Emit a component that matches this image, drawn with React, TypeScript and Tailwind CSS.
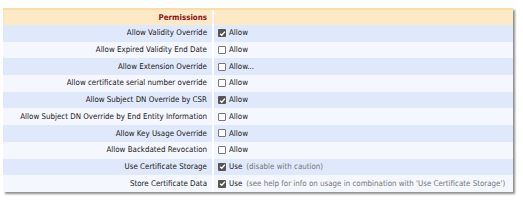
import React from 'react';

type Row = {
  label: string;
  checked: boolean;
  text: string;
  help?: string;
};

const rows: Row[] = [
  { label: 'Allow Validity Override', checked: true, text: 'Allow' },
  { label: 'Allow Expired Validity End Date', checked: false, text: 'Allow' },
  { label: 'Allow Extension Override', checked: false, text: 'Allow...' },
  { label: 'Allow certificate serial number override', checked: false, text: 'Allow' },
  { label: 'Allow Subject DN Override by CSR', checked: true, text: 'Allow' },
  { label: 'Allow Subject DN Override by End Entity Information', checked: false, text: 'Allow' },
  { label: 'Allow Key Usage Override', checked: false, text: 'Allow' },
  { label: 'Allow Backdated Revocation', checked: false, text: 'Allow' },
  { label: 'Use Certificate Storage', checked: true, text: 'Use', help: '(disable with caution)' },
  {
    label: 'Store Certificate Data',
    checked: true,
    text: 'Use',
    help: "(see help for info on usage in combination with 'Use Certificate Storage')",
  },
];

function Checkbox({ checked }: { checked: boolean }) {
  if (checked) {
    return (
      <span className="inline-flex items-center justify-center w-[8px] h-[8px] rounded-[1px] bg-[#555]">
        <svg width="7" height="7" viewBox="0 0 8 8">
          <path d="M1.3 4.2 L3.2 6 L6.8 1.8" fill="none" stroke="#fff" strokeWidth="1.5" />
        </svg>
      </span>
    );
  }
  return <span className="inline-block w-[8px] h-[8px] rounded-[1px] border border-[#777] bg-white" />;
}

export default function App() {
  return (
    <div className="w-[523px] h-[204px] bg-white pt-[8px] pl-[3px] font-['DejaVu_Sans',sans-serif] font-stretch-condensed text-[7.9px]">
      <div className="w-[510px] shadow-[2px_2px_2px_rgba(0,0,0,0.45)]">
        <div className="flex h-[17px] bg-[#fde9c6] border-t-2 border-[#fbdca6]">
          <div className="w-[209px] flex items-center justify-end pr-[5px] font-bold text-[#8b1515]">
            Permissions
          </div>
          <div className="flex-1 border-l-2 border-white" />
        </div>
        {rows.map((row, i) => (
          <div
            key={row.label}
            className={`flex h-[16.7px] ${i % 2 === 0 ? 'bg-[#e0e8fb]' : 'bg-[#f4f7fe]'}`}
          >
            <div className="w-[209px] flex items-center justify-end pr-[5px] text-[#1a1a1a]">
              {row.label}
            </div>
            <div className="flex-1 border-l-2 border-white flex items-center pl-[4px] gap-[3px]">
              <Checkbox checked={row.checked} />
              <span className="text-[#1a1a1a]">{row.text}</span>
              {row.help && <span className="text-[#777] ml-[1px]">{row.help}</span>}
            </div>
          </div>
        ))}
      </div>
    </div>
  );
}
